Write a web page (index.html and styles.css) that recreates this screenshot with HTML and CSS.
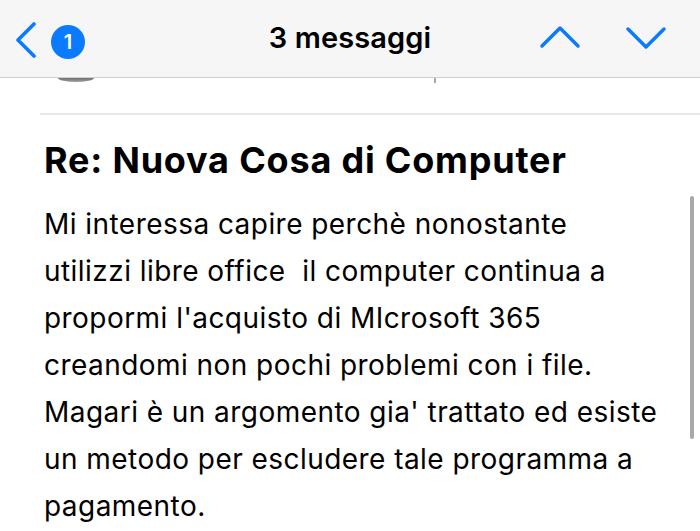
FILE: index.html
```html
<!DOCTYPE html>
<html lang="it">
<head>
  <meta charset="UTF-8">
  <title>3 messaggi</title>
  <meta name="viewport" content="width=device-width, initial-scale=1.0">
  <link rel="stylesheet" href="styles.css">
</head>
<body>

  <header class="nav-bar">
    <div class="nav-left">
      <svg class="back-icon" width="22" height="36" viewBox="0 0 22 36">
        <path d="M19 2 L3 18 L19 34" fill="none" stroke="#0a7aff" stroke-width="3.6" stroke-linecap="round" stroke-linejoin="round"/>
      </svg>
      <span class="badge">1</span>
    </div>
    <div class="nav-title">3 messaggi</div>
    <div class="nav-right">
      <svg class="arrow-icon" width="40" height="24" viewBox="0 0 40 24">
        <path d="M2 20 L20 2 L38 20" fill="none" stroke="#0a7aff" stroke-width="3.4" stroke-linecap="round" stroke-linejoin="round"/>
      </svg>
      <svg class="arrow-icon" width="40" height="24" viewBox="0 0 40 24">
        <path d="M2 3 L20 21 L38 3" fill="none" stroke="#0a7aff" stroke-width="3.4" stroke-linecap="round" stroke-linejoin="round"/>
      </svg>
    </div>
  </header>

  <div class="prev-message">
    <span class="avatar-edge"></span>
    <span class="time-tick"></span>
  </div>

  <main class="message">
    <h1 class="subject">Re: Nuova Cosa di Computer</h1>
    <p class="message-body">Mi interessa capire perchè nonostante<br>utilizzi libre office&nbsp; il computer continua a<br>propormi l'acquisto di MIcrosoft 365<br>creandomi non pochi problemi con i file.<br>Magari è un argomento gia' trattato ed esiste<br>un metodo per escludere tale programma a<br>pagamento.</p>
  </main>

  <div class="scroll-indicator"></div>

</body>
</html>
```

FILE: styles.css
```css
body {
  font-family: Inter, 'Noto Sans', sans-serif;
  margin: 0;
  padding: 0;
  background: #fff;
  color: #000;
  height: 531px;
  overflow: hidden;
}

.nav-bar {
  height: 78px;
  background: #f6f6f6;
  border-bottom: 1px solid #cfcfd2;
  display: flex;
  align-items: center;
  justify-content: space-between;
  padding: 0 34px 0 15px;
  box-sizing: border-box;
  position: relative;
}

.nav-left {
  display: flex;
  align-items: center;
  gap: 14px;
  padding-top: 2px;
}

.badge {
  width: 34px;
  height: 34px;
  border-radius: 50%;
  background: #0a7aff;
  color: #fff;
  font-size: 20px;
  font-weight: 600;
  display: flex;
  align-items: center;
  justify-content: center;
  margin-top: 4px;
}

.nav-title {
  position: absolute;
  left: 0;
  right: 0;
  text-align: center;
  font-size: 29px;
  font-weight: 600;
  letter-spacing: 0.1px;
  pointer-events: none;
  margin-top: -2px;
}

.nav-right {
  display: flex;
  align-items: center;
  gap: 46px;
  margin-top: -2px;
}

.prev-message {
  height: 35px;
  margin-left: 40px;
  border-bottom: 2px solid #e8e8ea;
  display: flex;
  align-items: flex-start;
}

.avatar-edge {
  width: 36px;
  height: 4px;
  margin-left: 18px;
  background: linear-gradient(#6e6e73, #a0a0a5);
  border-radius: 0 0 50% 50% / 0 0 100% 100%;
}

.time-tick {
  width: 2px;
  height: 5px;
  background: #a9a9ad;
  margin-left: 340px;
}

.message {
  padding: 0 20px 0 44px;
}

.subject {
  font-size: 36px;
  font-weight: 700;
  letter-spacing: 0.8px;
  margin: 23px 0 19px;
  white-space: nowrap;
}

.message-body {
  font-size: 28px;
  line-height: 47px;
  letter-spacing: 0.45px;
  margin: 0;
  white-space: nowrap;
}

.scroll-indicator {
  position: absolute;
  top: 196px;
  right: 6px;
  width: 4px;
  height: 243px;
  border-radius: 2px;
  background: #a8a8ab;
}
```
